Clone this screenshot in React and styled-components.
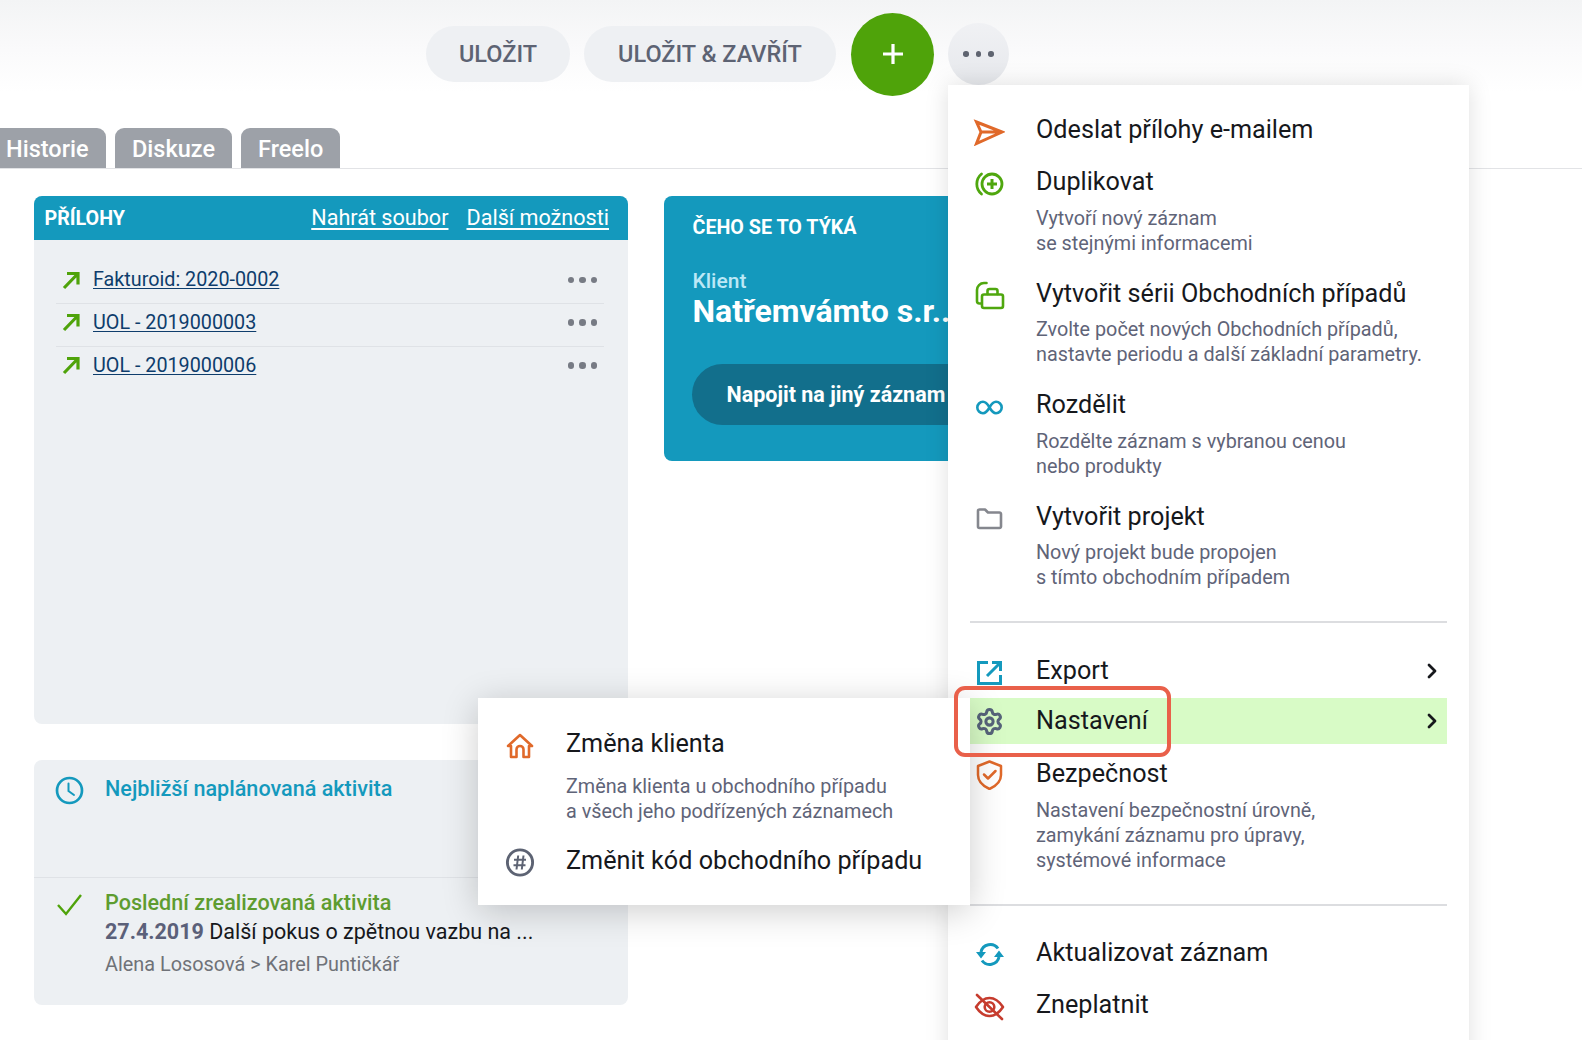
import React from "react";
import styled, { createGlobalStyle } from "styled-components";
import { Settings } from "lucide-react";

const Global = createGlobalStyle`
  html, body { margin: 0; padding: 0; background: #fff; }
  body { font-family: Roboto, "Liberation Sans", sans-serif; overflow: hidden; }
  * { box-sizing: border-box; }
`;

const Page = styled.div`
  position: relative;
  width: 1582px;
  height: 1040px;
  overflow: hidden;
  background: #fff;
`;
const TopBar = styled.header`
  height: 108px;
  padding-left: 426px;
  display: flex;
  align-items: center;
  background: linear-gradient(#f3f4f5 0, #fafafb 50px, #fff 92px);
`;
const PillButton = styled.button`
  height: 56px;
  width: ${(p) => p.$w}px;
  margin-right: ${(p) => p.$mr}px;
  border: 0;
  border-radius: 28px;
  background: #eef0f3;
  color: #5d6373;
  font: 500 23.5px Roboto, sans-serif;
  padding: 0;
`;
const AddButton = styled.button`
  width: 83px;
  height: 83px;
  margin-right: 14px;
  border: 0;
  border-radius: 50%;
  background: #4fa30a;
  padding: 0;
  display: flex;
  align-items: center;
  justify-content: center;
`;
const MoreButton = styled.button`
  width: 61px;
  height: 62px;
  border: 0;
  border-radius: 50%;
  background: linear-gradient(#f0f1f4, #e6e8ec);
  padding: 0;
  display: flex;
  align-items: center;
  justify-content: center;
  gap: 7px;
`;
const Dot = styled.i`
  width: ${(p) => p.$s}px;
  height: ${(p) => p.$s}px;
  border-radius: 50%;
  background: ${(p) => p.$c};
`;
const Tabs = styled.nav`
  margin-top: 20px;
  height: 41px;
  display: flex;
  gap: 9px;
  border-bottom: 1px solid #e2e3e6;
`;
const Tab = styled.div`
  height: 40px;
  width: ${(p) => p.$w}px;
  padding-left: ${(p) => p.$pl}px;
  border-radius: ${(p) => (p.$first ? "0 9px 0 0" : "9px 9px 0 0")};
  background: #9da1a8;
  color: #fff;
  font: 500 23.5px/43px Roboto, sans-serif;
`;
const Content = styled.main`
  padding: 27px 0 0 34px;
  display: flex;
  gap: 36px;
  align-items: flex-start;
`;
const LeftColumn = styled.div`
  width: 594px;
  display: flex;
  flex-direction: column;
  gap: 36px;
`;
const Attachments = styled.section`
  height: 528px;
  border-radius: 8px;
  background: #edf0f3;
  overflow: hidden;
`;
const AttachHead = styled.div`
  height: 44px;
  padding: 0 19px 0 10.5px;
  display: flex;
  align-items: center;
  background: #1499bd;
  color: #fff;
`;
const AttachTitle = styled.div`
  font: 700 19.7px Roboto, sans-serif;
  flex: 1;
`;
const HeadLink = styled.a`
  margin-left: 18px;
  color: #fff;
  font: 400 21.6px Roboto, sans-serif;
  text-decoration: underline;
  text-underline-offset: 3px;
  margin-top: -2px;
`;
const AttachList = styled.div`
  padding: 21.5px 24px 0 22px;
`;
const AttachRow = styled.div`
  height: 42.5px;
  padding: 0 7px 5px 5px;
  display: flex;
  align-items: center;
  border-bottom: ${(p) => (p.$last ? "0" : "1px solid #dfe2e6")};
`;
const AttachLink = styled.a`
  flex: 1;
  margin-left: 12px;
  color: #0e3d6c;
  font: 400 19.75px Roboto, sans-serif;
  text-decoration: underline;
  text-underline-offset: 2px;
`;
const RowDots = styled.div`
  display: flex;
  gap: 5px;
`;
const Activity = styled.section`
  height: 245px;
  border-radius: 8px;
  background: #edf0f3;
  display: flex;
  flex-direction: column;
`;
const ActivityItem = styled.div`
  height: ${(p) => p.$h}px;
  padding: ${(p) => p.$pt}px 0 0 21px;
  display: flex;
  gap: 21px;
  border-bottom: ${(p) => (p.$line ? "1px solid #dfe2e6" : "0")};
`;
const ActivityTitle = styled.div`
  color: ${(p) => p.$c};
  font: 500 21.6px/26px Roboto, sans-serif;
`;
const ActivityLine = styled.div`
  margin-top: 3px;
  color: #16181c;
  font: 400 21.5px/26px Roboto, sans-serif;
  white-space: nowrap;
`;
const ActivityDate = styled.b`
  color: #5b6079;
  font-weight: 700;
`;
const ActivityMeta = styled.div`
  margin-top: 7px;
  color: #6f7278;
  font: 400 19.85px/26px Roboto, sans-serif;
`;
const Card = styled.section`
  width: 640px;
  height: 265px;
  padding: 19px 28.5px;
  border-radius: 8px;
  background: #1499bd;
  color: #fff;
`;
const CardLabel = styled.div`
  font: 700 19.7px/26px Roboto, sans-serif;
`;
const CardClient = styled.div`
  margin-top: 28px;
  color: #bce8f6;
  font: 500 21px/24px Roboto, sans-serif;
`;
const CardName = styled.div`
  color: #fff;
  font: 700 32px/37px Roboto, sans-serif;
  white-space: nowrap;
`;
const CardButton = styled.button`
  margin-top: 34px;
  height: 61px;
  width: 400px;
  margin-left: -0.5px;
  padding: 0 0 0 34.5px;
  border: 0;
  border-radius: 31px;
  background: #126f8c;
  color: #fff;
  font: 700 21.5px Roboto, sans-serif;
  text-align: left;
`;
const Menu = styled.div`
  position: absolute;
  left: 948px;
  top: 85px;
  width: 521px;
  height: 1000px;
  padding: 22px 22px;
  background: #fff;
  box-shadow: 0 0 22px rgba(0, 0, 0, 0.13);
  z-index: 1;
`;
const SubMenu = styled.div`
  position: absolute;
  left: 478px;
  top: 698px;
  width: 492px;
  height: 207px;
  padding: 23px 0 0 26px;
  background: #fff;
  box-shadow: 0 6px 34px rgba(0, 0, 0, 0.2);
  z-index: 2;
`;
const Highlight = styled.div`
  position: absolute;
  left: 954px;
  top: 686px;
  width: 217px;
  height: 71px;
  border: 4px solid #e9604a;
  border-radius: 11px;
  z-index: 3;
`;
const Item = styled.div`
  display: flex;
  background: ${(p) => (p.$active ? "#d8fbc6" : "transparent")};
  margin-bottom: ${(p) => p.$mb}px;
  padding-left: ${(p) => p.$inset}px;
`;
const IconCol = styled.div`
  width: ${(p) => p.$w}px;
  height: 46px;
  flex: none;
  display: flex;
  align-items: center;
  & > svg.lucide { margin-left: 2px; }
`;
const ItemBody = styled.div`
  flex: 1;
`;
const ItemTitle = styled.div`
  display: flex;
  justify-content: space-between;
  align-items: center;
  height: 46px;
  padding-right: 9px;
  color: #16181c;
  font: 400 25.2px/46px Roboto, sans-serif;
`;
const DescBlock = styled.div`
  margin-top: ${(p) => p.$gap}px;
`;
const ItemDesc = styled.div`
  color: #5f6478;
  font: 400 19.8px/25px Roboto, sans-serif;
`;
const Divider = styled.hr`
  margin: ${(p) => p.$top}px 0 ${(p) => p.$bottom}px;
  height: 2px;
  border: 0;
  background: #dcdde0;
`;

const Svg = ({ children, c, sw = 2.4 }) => (
  <svg width="32" height="32" viewBox="0 0 32 32" fill="none" stroke={c} strokeWidth={sw} strokeLinecap="round" strokeLinejoin="round">
    {children}
  </svg>
);
const orange = "#e0692a", green = "#4fa70e", blue = "#1499bd";

const icons = {
  send: (
    <Svg c={orange} sw={3}>
      <path strokeLinecap="butt" strokeLinejoin="miter" d="M3.5 8 L29 18 L3.5 29.5 L8 18 Z M8 18 H29" />
    </Svg>
  ),
  dup: (
    <Svg c={green} sw={2.8}>
      <circle cx="19" cy="18" r="10" />
      <path d="M19 13v10M14 18h10" strokeWidth="3" strokeLinecap="butt" />
      <path d="M8.5 8A13 13 0 0 0 8.5 28" />
    </Svg>
  ),
  case: (
    <Svg c={green} sw={2.6}>
      <rect x="9" y="16.5" width="21" height="13.5" rx="2" />
      <path d="M14.5 16v-3a2 2 0 0 1 2-2h6a2 2 0 0 1 2 2v3" />
      <path d="M8 25.5H6.5A2.5 2.5 0 0 1 4 23V12A7 7 0 0 1 11 5H13.5" />
    </Svg>
  ),
  split: (
    <Svg c={blue} sw={2.6}>
      <path d="M16.5 18.5C14.5 15 12.5 12.8 10 12.8A5.7 5.7 0 0 0 10 24.2C12.5 24.2 14.5 22 16.5 18.5C18.5 15 20.5 12.8 23 12.8A5.7 5.7 0 0 1 23 24.2C20.5 24.2 18.5 22 16.5 18.5Z" />
    </Svg>
  ),
  folder: (
    <Svg c="#85878e" sw={2.6}>
      <path d="M5 10a1.5 1.5 0 0 1 1.5-1.5H12l3 3h11.5A1.5 1.5 0 0 1 28 13v12.5a1.5 1.5 0 0 1-1.5 1.5h-20A1.5 1.5 0 0 1 5 25.5Z" />
    </Svg>
  ),
  export: (
    <Svg c={blue} sw={3}>
      <path strokeLinecap="butt" strokeLinejoin="miter" d="M15 7.5H5.5V28.5H27.5V20M19 7.5H27.5V16M14 21L27 8" />
    </Svg>
  ),
  gear: <Settings size={29} strokeWidth={2.5} color="#56637a" />,
  shield: (
    <Svg c={orange} sw={2.5}>
      <path d="M16.5 3.5L28 8V17C28 24 22 28.5 16.5 31C11 28.5 5 24 5 17V8Z" />
      <path d="M11 16.5l4 4l7.5-7.5" />
    </Svg>
  ),
  refresh: (
    <Svg c={blue} sw={3}>
      <path strokeLinecap="butt" d="M8 15A9.5 9.5 0 0 1 25 11.5M26 20A9.5 9.5 0 0 1 9 23.5" />
      <path fill={blue} stroke="none" d="M3 15H13L8 21.5ZM21 20H31L26 13.5Z" />
    </Svg>
  ),
  eyeOff: (
    <Svg c="#c63c2e" sw={2.6}>
      <path d="M3 18C8 10.5 13 9 16.5 9C20 9 25 10.5 30 18C25 25.5 20 27 16.5 27C13 27 8 25.5 3 18Z" />
      <circle cx="16.5" cy="18" r="4.8" />
      <path d="M4 6L29 30" />
    </Svg>
  ),
  home: (
    <Svg c={orange} sw={2.6}>
      <path d="M4 18L16 7L28 18H25V29H19.5V21.5a3.5 3.5 0 0 0-7 0V29H7V18Z" />
    </Svg>
  ),
  hash: (
    <Svg c="#5d6373" sw={2.9}>
      <circle cx="16" cy="17.5" r="12.6" />
      <path strokeWidth="2" strokeLinecap="butt" d="M14.2 10.5L12.5 24.5M19.5 10.5L17.8 24.5M10 14.8H22M9.5 20.2H21.5" />
    </Svg>
  ),
};

const Chevron = () => (
  <svg width="12" height="18" viewBox="0 0 12 18" fill="none" stroke="#16181c" strokeWidth="2.8" strokeLinecap="round" strokeLinejoin="round">
    <path d="M3 3l6 6l-6 6" />
  </svg>
);
const UpArrow = () => (
  <svg width="20" height="20" viewBox="0 0 20 20" fill="none" stroke="#4fa30a" strokeWidth="3.2" strokeLinecap="butt">
    <path d="M3 18L17 3.5M6 3.5H17V14.5" />
  </svg>
);
const Clock = () => (
  <svg width="29" height="29" viewBox="0 0 29 29" fill="none" stroke="#1499bd" strokeWidth="2.7" strokeLinecap="round">
    <circle cx="14.5" cy="14.5" r="12.5" />
    <path strokeWidth="2" d="M13.5 7.5V15L19 19" />
  </svg>
);
const Check = () => (
  <svg width="29" height="29" viewBox="0 0 29 29" fill="none" stroke="#4fa30a" strokeWidth="2.4">
    <path d="M3 15L11 24L26 5" />
  </svg>
);

const MenuEntry = ({ icon, title, desc, chevron, active, sub, mb }) => (
  <Item $mb={mb ?? (desc ? 15 : 6)} $active={active} $inset={sub ? 0 : 3}>
    <IconCol $w={sub ? 62 : 63}>{icons[icon]}</IconCol>
    <ItemBody>
      <ItemTitle>
        {title}
        {chevron && <Chevron />}
      </ItemTitle>
      {desc && (
        <DescBlock $gap={sub ? 6.5 : 0.5}>
          {desc.map((d) => <ItemDesc key={d}>{d}</ItemDesc>)}
        </DescBlock>
      )}
    </ItemBody>
  </Item>
);

const attachments = ["Fakturoid: 2020-0002", "UOL - 2019000003", "UOL - 2019000006"];

export default function App() {
  return (
    <Page>
      <Global />
      <TopBar>
        <PillButton $w={144} $mr={14}>ULOŽIT</PillButton>
        <PillButton $w={252} $mr={15}>ULOŽIT &amp; ZAVŘÍT</PillButton>
        <AddButton aria-label="Přidat">
          <svg width="24" height="24" viewBox="0 0 24 24" stroke="#fff" strokeWidth="3.2">
            <path d="M12 2v20M2 12h20" />
          </svg>
        </AddButton>
        <MoreButton aria-label="Více">
          <Dot $s={5.5} $c="#5f6470" />
          <Dot $s={5.5} $c="#5f6470" />
          <Dot $s={5.5} $c="#5f6470" />
        </MoreButton>
      </TopBar>
      <Tabs>
        <Tab $first $w={106} $pl={6}>Historie</Tab>
        <Tab $w={117} $pl={17}>Diskuze</Tab>
        <Tab $w={99} $pl={17}>Freelo</Tab>
      </Tabs>
      <Content>
        <LeftColumn>
          <Attachments>
            <AttachHead>
              <AttachTitle>PŘÍLOHY</AttachTitle>
              <HeadLink>Nahrát soubor</HeadLink>
              <HeadLink>Další možnosti</HeadLink>
            </AttachHead>
            <AttachList>
              {attachments.map((a, i) => (
                <AttachRow key={a} $last={i === attachments.length - 1}>
                  <UpArrow />
                  <AttachLink>{a}</AttachLink>
                  <RowDots>
                    <Dot $s={6.5} $c="#777b84" />
                    <Dot $s={6.5} $c="#777b84" />
                    <Dot $s={6.5} $c="#777b84" />
                  </RowDots>
                </AttachRow>
              ))}
            </AttachList>
          </Attachments>
          <Activity>
            <ActivityItem $h={118} $pt={16} $line>
              <Clock />
              <ActivityTitle $c="#1499bd">Nejbližší naplánovaná aktivita</ActivityTitle>
            </ActivityItem>
            <ActivityItem $h={127} $pt={12}>
              <Check />
              <div>
                <ActivityTitle $c="#5e9c30">Poslední zrealizovaná aktivita</ActivityTitle>
                <ActivityLine>
                  <ActivityDate>27.4.2019</ActivityDate> Další pokus o zpětnou vazbu na ...
                </ActivityLine>
                <ActivityMeta>Alena Lososová &gt; Karel Puntičkář</ActivityMeta>
              </div>
            </ActivityItem>
          </Activity>
        </LeftColumn>
        <Card>
          <CardLabel>ČEHO SE TO TÝKÁ</CardLabel>
          <CardClient>Klient</CardClient>
          <CardName>Natřemvámto s.r..</CardName>
          <CardButton>Napojit na jiný záznam</CardButton>
        </Card>
      </Content>
      <Menu>
        <MenuEntry icon="send" title="Odeslat přílohy e-mailem" />
        <MenuEntry icon="dup" title="Duplikovat" desc={["Vytvoří nový záznam", "se stejnými informacemi"]} />
        <MenuEntry icon="case" title="Vytvořit sérii Obchodních případů" desc={["Zvolte počet nových Obchodních případů,", "nastavte periodu a další základní parametry."]} />
        <MenuEntry icon="split" title="Rozdělit" desc={["Rozdělte záznam s vybranou cenou", "nebo produkty"]} />
        <MenuEntry icon="folder" title="Vytvořit projekt" desc={["Nový projekt bude propojen", "s tímto obchodním případem"]} />
        <Divider $top={31} $bottom={25} />
        <MenuEntry mb={4} icon="export" title="Export" chevron />
        <MenuEntry mb={7} icon="gear" title="Nastavení" chevron active />
        <MenuEntry icon="shield" title="Bezpečnost" desc={["Nastavení bezpečnostní úrovně,", "zamykání záznamu pro úpravy,", "systémové informace"]} />
        <Divider $top={31.5} $bottom={24} />
        <MenuEntry icon="refresh" title="Aktualizovat záznam" />
        <MenuEntry icon="eyeOff" title="Zneplatnit" />
      </Menu>
      <SubMenu>
        <MenuEntry sub mb={14} icon="home" title="Změna klienta" desc={["Změna klienta u obchodního případu", "a všech jeho podřízených záznamech"]} />
        <MenuEntry sub icon="hash" title="Změnit kód obchodního případu" />
      </SubMenu>
      <Highlight />
    </Page>
  );
}
